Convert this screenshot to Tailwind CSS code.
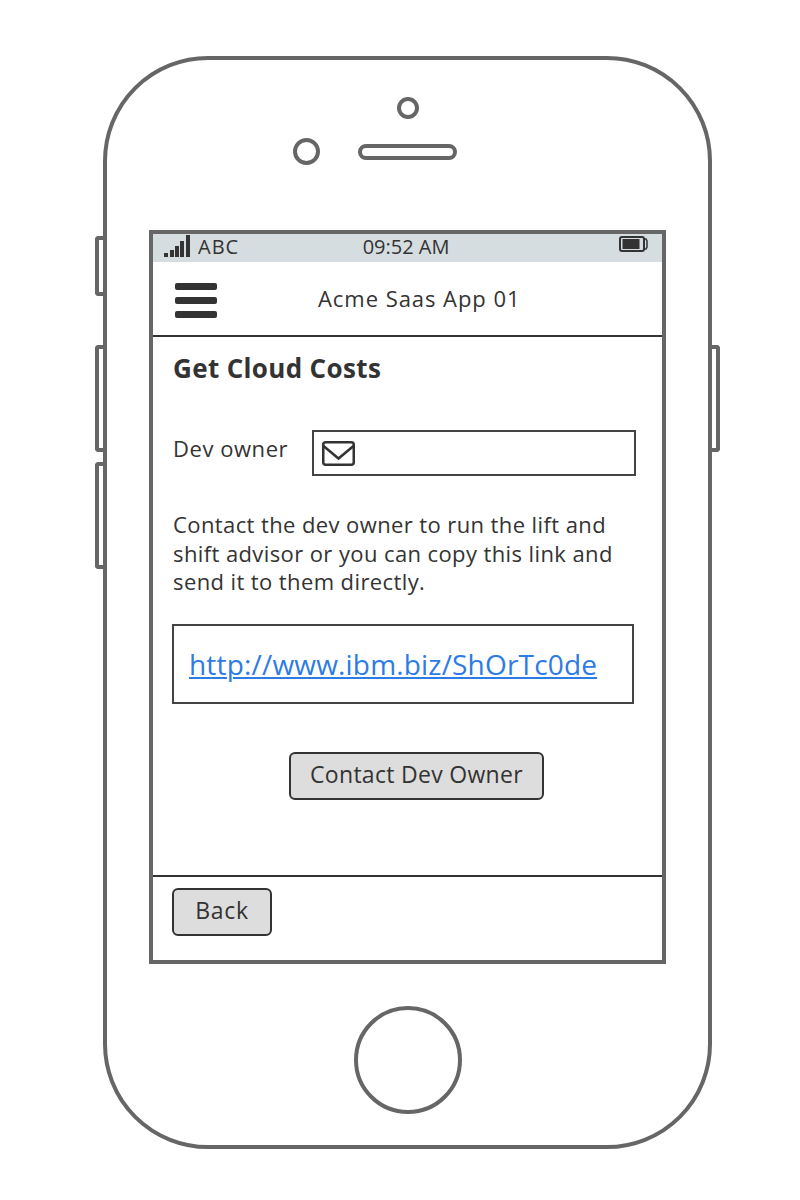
<!DOCTYPE html>
<html lang="en">
  <head>
    <meta charset="UTF-8" />
    <meta name="viewport" content="width=device-width, initial-scale=1.0" />
    <title>Get Cloud Costs</title>
    <script src="https://cdn.jsdelivr.net/npm/@tailwindcss/browser@4"></script>
  </head>
  <body class="bg-white h-[1200px] overflow-hidden font-['Open_Sans','Noto_Sans',sans-serif] text-[#333]">
    <div class="pt-[56px] pl-[103px]">
      <!-- phone body, side buttons hang off the edge -->
      <div class="relative w-[609px] h-[1093px] border-4 border-[#666] rounded-[105px] flex flex-col items-center">
        <div class="absolute left-[-12px] top-[176px] w-[8px] h-[60px] border-4 border-r-0 border-[#666] rounded-l-[4px]"></div>
        <div class="absolute left-[-12px] top-[285px] w-[8px] h-[107px] border-4 border-r-0 border-[#666] rounded-l-[4px]"></div>
        <div class="absolute left-[-12px] top-[402px] w-[8px] h-[107px] border-4 border-r-0 border-[#666] rounded-l-[4px]"></div>
        <div class="absolute right-[-12px] top-[285px] w-[8px] h-[107px] border-4 border-l-0 border-[#666] rounded-r-[4px]"></div>

        <div class="mt-[37px] w-[22px] h-[22px] border-4 border-[#666] rounded-full"></div>
        <div class="mt-[19px] self-start ml-[186px] w-[164px] h-[27px] flex items-center justify-between">
          <div class="w-[27px] h-[27px] border-4 border-[#666] rounded-full"></div>
          <div class="w-[99px] h-[16px] border-4 border-[#666] rounded-full"></div>
        </div>

        <!-- screen -->
        <div class="mt-[65px] w-[517px] h-[734px] border-4 border-[#666] flex flex-col shrink-0">
          <div class="h-[28px] bg-[#d6dde0] flex items-center pl-[11px] pr-[14px] text-[20px] relative">
            <svg class="w-[26px] h-[22px] mr-[8px] mb-[4px]" viewBox="0 0 26 22" fill="#333">
              <rect x="0" y="18" width="4" height="4" />
              <rect x="6" y="15" width="4" height="7" />
              <rect x="11" y="11" width="4" height="11" />
              <rect x="16" y="6" width="4" height="16" />
              <rect x="22" y="0" width="4" height="22" />
            </svg>
            <span class="mb-[2px] tracking-[1px]">ABC</span>
            <span class="flex-1 text-center pr-[46px] mb-[2px]">09:52 AM</span>
            <svg class="w-[29px] h-[16px] mb-[8px]" viewBox="0 0 29 16">
              <rect x="1" y="1" width="24" height="14" rx="2" fill="none" stroke="#333" stroke-width="2" />
              <rect x="3.5" y="3" width="17" height="10" fill="#333" />
              <path d="M25 3h2l1 2v6l-1 2h-2" fill="none" stroke="#333" stroke-width="1.5" />
            </svg>
          </div>

          <header class="h-[75px] border-b-2 border-[#333] flex items-center pl-[22px]">
            <div class="flex flex-col gap-[7px] w-[42px] mt-[4px]">
              <div class="h-[7px] bg-[#333] rounded-[2px]"></div>
              <div class="h-[7px] bg-[#333] rounded-[2px]"></div>
              <div class="h-[7px] bg-[#333] rounded-[2px]"></div>
            </div>
            <h2 class="ml-[101px] text-[22px] tracking-[0.95px] whitespace-nowrap">Acme Saas App 01</h2>
          </header>

          <main class="flex-1 pl-[20px] pt-[12px]">
            <h1 class="text-[26px] font-bold leading-[38px] tracking-[0.35px] whitespace-nowrap">Get Cloud Costs</h1>
            <div class="mt-[43px] flex">
              <label class="text-[22px] w-[139px] leading-[36px] tracking-[0.55px]">Dev owner</label>
              <div class="w-[324px] h-[46px] border-2 border-[#444] flex items-center pl-[8px]">
                <svg class="w-[33px] h-[25px]" viewBox="0 0 33 25" fill="none" stroke="#333" stroke-width="2.5">
                  <rect x="1.25" y="1.25" width="30.5" height="22.5" rx="2.5" />
                  <path d="M1.5 5l15 12.5L31.5 5" />
                </svg>
              </div>
            </div>
            <p class="mt-[34px] w-[470px] text-[22px] leading-[28.5px] tracking-[0.4px]">Contact the dev owner to run the lift and<br />shift advisor or you can copy this link and<br />send it to them directly.</p>
            <div class="mt-[28px] ml-[-1px] w-[462px] h-[80px] border-2 border-[#444] flex items-center pl-[15px] pt-[1px]">
              <a href="#" class="text-[28px] tracking-[0.18px] text-[#2d7be5] underline underline-offset-2 decoration-2 whitespace-nowrap">http://www.ibm.biz/ShOrTc0de</a>
            </div>
            <button class="block mt-[48px] ml-[116px] w-[255px] h-[48px] bg-[#ddd] border-2 border-[#333] rounded-[6px] text-[23px] tracking-[0.3px] pb-[2px]">Contact Dev Owner</button>
          </main>

          <footer class="h-[85px] border-t-2 border-[#333] pt-[11px] pl-[19px]">
            <button class="block w-[100px] h-[48px] bg-[#ddd] border-2 border-[#333] rounded-[6px] text-[23px] tracking-[0.7px] pb-[3px]">Back</button>
          </footer>
        </div>

        <div class="mt-[42px] w-[108px] h-[108px] border-4 border-[#666] rounded-full"></div>
      </div>
    </div>
  </body>
</html>
